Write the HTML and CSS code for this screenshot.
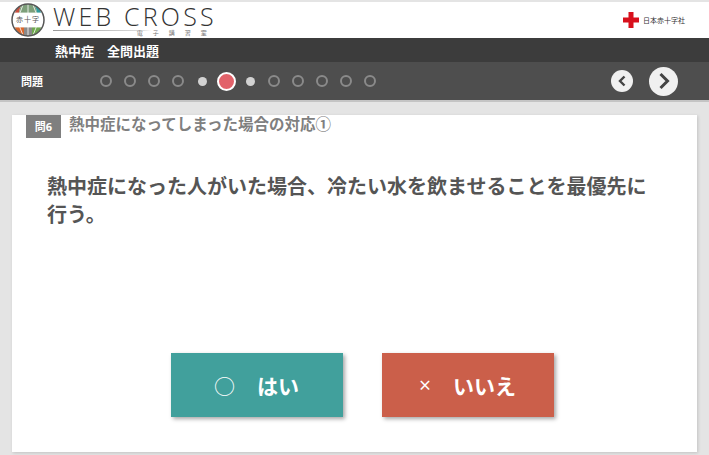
FILE: index.html
```html
<!DOCTYPE html>
<html lang="ja">
<head>
    <meta charset="UTF-8">
    <meta name="viewport" content="width=device-width, initial-scale=1.0">
    <title>WEB CROSS 電子講習室</title>
    <link rel="stylesheet" href="styles.css">
</head>
<body>
    <header class="header">
        <div class="brand">
            <div class="globe">
                <svg width="34" height="34" viewBox="0 0 34 34">
                    <circle cx="17" cy="17" r="16" fill="#fff"/>
                    <path d="M3.500 10 A16 16 0 0 1 10 2.600 Q8.500 6 8 10 Z" fill="#c9503f"/>
                    <path d="M10 2.600 A16 16 0 0 1 24 2.600 Q25.500 6 26 10 H8 Q8.500 6 10 2.600 Z" fill="#7d9f7a"/>
                    <path d="M24 2.600 A16 16 0 0 1 30.500 10 H26 Q25.500 6 24 2.600 Z" fill="#2f9a9c"/>
                    <path d="M3.500 24 H13 V32.600 A16 16 0 0 1 3.500 24 Z" fill="#d9682f"/>
                    <path d="M21 24 H30.500 A16 16 0 0 1 21 32.600 Z" fill="#6fa84f"/>
                    <path d="M13 24 H21 V32.600 A16 16 0 0 1 13 32.600 Z" fill="#8a8a8a"/>
                    <path d="M17 1 V10 M17 24 V33 M12 1.800 Q8 10 8 17 Q8 25 12 32.200 M22 1.800 Q26 10 26 17 Q26 25 22 32.200 M3.500 10 H30.500 M3.500 24 H30.500" stroke="#fff" stroke-width="0.800" fill="none"/>
                    <circle cx="17" cy="17" r="16" fill="none" stroke="#555" stroke-width="1.500"/>
                </svg>
                <span class="globe-text">赤十字</span>
            </div>
            <div class="brand-text">
                <div class="brand-name">WEB CROSS</div>
                <div class="brand-sub">電子講習室</div>
            </div>
        </div>
        <div class="redcross">
            <svg width="16" height="16" viewBox="0 0 16 16"><path d="M5.500 0h5v5.500h5.500v5h-5.500v5.500h-5v-5.500h-5.500v-5h5.500z" fill="#d8101c"/></svg>
            <span>日本赤十字社</span>
        </div>
    </header>

    <div class="course-bar">
        <span>熱中症</span>
        <span>全問出題</span>
    </div>

    <nav class="progress-bar">
        <div class="progress-label">問題</div>
        <div class="dots">
            <span class="dot"></span>
            <span class="dot"></span>
            <span class="dot"></span>
            <span class="dot"></span>
            <span class="dot done"></span>
            <span class="dot current"></span>
            <span class="dot done"></span>
            <span class="dot"></span>
            <span class="dot"></span>
            <span class="dot"></span>
            <span class="dot"></span>
            <span class="dot"></span>
        </div>
        <div class="arrows">
            <a href="#" class="arrow prev">
                <svg width="10" height="12" viewBox="0 0 10 12"><path d="M7.500 1.500 L3 6 L7.500 10.500" fill="none" stroke="#444" stroke-width="2.400"/></svg>
            </a>
            <a href="#" class="arrow next">
                <svg width="14" height="18" viewBox="0 0 14 18"><path d="M3.500 2 L10.500 9 L3.500 16" fill="none" stroke="#444" stroke-width="3"/></svg>
            </a>
        </div>
    </nav>

    <main class="content">
        <section class="card">
            <div class="question-head">
                <div class="question-no">問6</div>
                <div class="question-title">熱中症になってしまった場合の対応①</div>
            </div>
            <p class="question-text">熱中症になった人がいた場合、冷たい水を飲ませることを最優先に行う。</p>
            <div class="answers">
                <a href="#" class="answer yes"><span class="mark">○</span>はい</a>
                <a href="#" class="answer no"><span class="mark">×</span>いいえ</a>
            </div>
        </section>
    </main>
</body>
</html>
```

FILE: styles.css
```css
* {
    margin: 0;
    padding: 0;
    box-sizing: border-box;
}

html, body {
    height: 100%;
    overflow: hidden;
}

body {
    font-family: "Open Sans", "Noto Sans CJK JP", sans-serif;
    background: #e4e4e4;
    color: #555;
    display: flex;
    flex-direction: column;
}

.header {
    height: 38px;
    background: #fff;
    border-top: 2px solid #e4e4e4;
    display: flex;
    justify-content: space-between;
    align-items: center;
    padding: 0 24px 0 11px;
}

.brand {
    display: flex;
    align-items: center;
    gap: 8px;
}

.globe {
    position: relative;
    width: 34px;
    height: 34px;
}

.globe svg {
    display: block;
}

/* sits over the white band of the globe */
.globe-text {
    position: absolute;
    top: 12px;
    left: 0;
    width: 34px;
    font-size: 7px;
    line-height: 10px;
    letter-spacing: 1px;
    text-align: center;
    color: #555;
}

.brand-text {
    display: flex;
    flex-direction: column;
}

.brand-name {
    font-size: 25px;
    font-weight: 300;
    line-height: 26px;
    letter-spacing: 3.200px;
    color: #333;
    white-space: nowrap;
}

.brand-sub {
    font-size: 6px;
    line-height: 8px;
    letter-spacing: 10px;
    color: #777;
    text-align: right;
    white-space: nowrap;
    background: linear-gradient(90deg, #999 0, #ddd 55%, transparent 60%) no-repeat 0 1px / 100% 1px;
}

.redcross {
    display: flex;
    align-items: center;
    gap: 4px;
    font-size: 7px;
    color: #333;
}

.course-bar {
    height: 24px;
    background: #3c3c3c;
    color: #fff;
    font-size: 13px;
    font-weight: bold;
    display: flex;
    align-items: center;
    gap: 13px;
    padding-left: 55px;
}

.progress-bar {
    height: 38px;
    background: #4e4e4e;
    color: #fff;
    display: flex;
    align-items: center;
    padding: 0 31px 0 21px;
}

.progress-label {
    width: 79px;
    font-size: 11px;
    font-weight: bold;
}

.dots {
    display: flex;
    align-items: center;
    gap: 12px;
    flex: 1;
}

.dot {
    width: 12px;
    height: 12px;
    border: 2px solid #8a8a8a;
    border-radius: 50%;
}

.dot.done {
    width: 9px;
    height: 9px;
    margin: 0 1.500px;
    border: none;
    background: #d2d2d2;
}

.dot.current {
    width: 19px;
    height: 19px;
    margin: 0 -3.500px;
    border: 2px solid #fff;
    background: #e2626a;
}

.arrows {
    display: flex;
    align-items: center;
    gap: 16px;
}

.arrow {
    display: flex;
    align-items: center;
    justify-content: center;
    border-radius: 50%;
    background: #f0f0f0;
}

.arrow.prev {
    width: 22px;
    height: 22px;
}

.arrow.next {
    width: 29px;
    height: 29px;
}

.content {
    flex: 1;
    min-height: 0;
    border-top: 2px solid #c4c4c4;
    padding: 13px 12px 3px;
}

.card {
    height: 100%;
    background: #fff;
    box-shadow: 1px 1px 3px rgba(0, 0, 0, 0.15);
    display: flex;
    flex-direction: column;
}

.question-head {
    display: flex;
    align-items: flex-start;
    gap: 8px;
    padding-left: 14px;
}

.question-no {
    width: 35px;
    height: 23px;
    background: #7f7f7f;
    color: #fff;
    font-size: 11px;
    font-weight: bold;
    line-height: 23px;
    text-align: center;
}

.question-title {
    font-size: 15.500px;
    font-weight: bold;
    line-height: 18px;
    color: #7f7f7f;
}

.question-text {
    margin: 35px 35px 0;
    font-size: 20px;
    font-weight: bold;
    line-height: 28px;
    color: #555;
}

.answers {
    margin-top: auto;
    margin-bottom: 35px;
    display: flex;
    justify-content: center;
    gap: 39px;
    padding-left: 15px;
}

.answer {
    width: 172px;
    height: 64px;
    display: flex;
    align-items: center;
    justify-content: center;
    color: #fff;
    font-size: 21px;
    font-weight: bold;
    text-decoration: none;
    box-shadow: 2px 2px 4px rgba(0, 0, 0, 0.35);
}

.answer .mark {
    margin-right: 22px;
    font-weight: normal;
}

.answer.yes {
    background: #41a09c;
}

.answer.no {
    background: #cb5f4a;
}
```
